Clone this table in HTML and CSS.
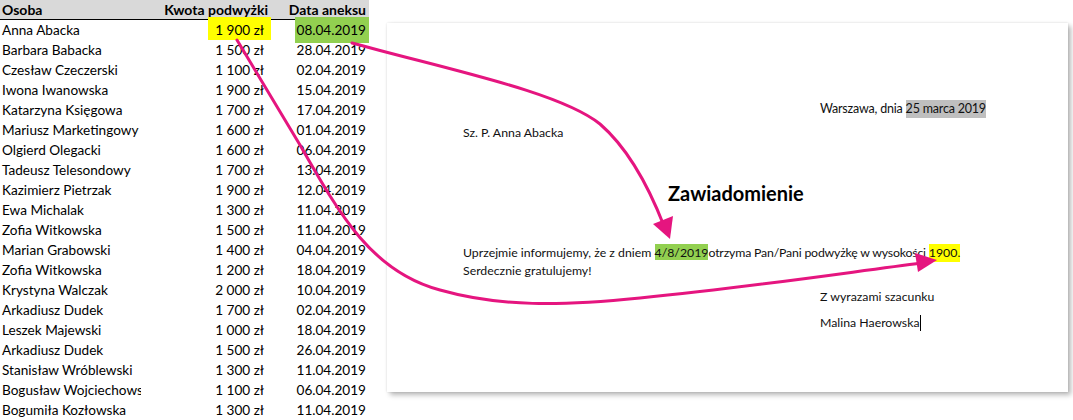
FILE: index.html
```html
<!DOCTYPE html>
<html lang="pl">
<head>
<meta charset="utf-8">
<title>Korespondencja seryjna</title>
<link rel="stylesheet" href="styles.css">
</head>
<body>
<div class="stage">
  <div class="sheet">
    <div class="row head">
      <div class="c name">Osoba</div>
      <div class="c amt">Kwota podwyżki</div>
      <div class="c date">Data aneksu</div>
    </div>
    <div class="row">
      <div class="c name">Anna Abacka</div>
      <div class="c amt"><span class="hl-yellow">1 900 zł</span></div>
      <div class="c date"><span class="hl-green">08.04.2019</span></div>
    </div>
    <div class="row"><div class="c name">Barbara Babacka</div><div class="c amt">1 500 zł</div><div class="c date">28.04.2019</div></div>
    <div class="row"><div class="c name">Czesław Czeczerski</div><div class="c amt">1 100 zł</div><div class="c date">02.04.2019</div></div>
    <div class="row"><div class="c name">Iwona Iwanowska</div><div class="c amt">1 900 zł</div><div class="c date">15.04.2019</div></div>
    <div class="row"><div class="c name">Katarzyna Księgowa</div><div class="c amt">1 700 zł</div><div class="c date">17.04.2019</div></div>
    <div class="row"><div class="c name">Mariusz Marketingowy</div><div class="c amt">1 600 zł</div><div class="c date">01.04.2019</div></div>
    <div class="row"><div class="c name">Olgierd Olegacki</div><div class="c amt">1 600 zł</div><div class="c date">06.04.2019</div></div>
    <div class="row"><div class="c name">Tadeusz Telesondowy</div><div class="c amt">1 700 zł</div><div class="c date">13.04.2019</div></div>
    <div class="row"><div class="c name">Kazimierz Pietrzak</div><div class="c amt">1 900 zł</div><div class="c date">12.04.2019</div></div>
    <div class="row"><div class="c name">Ewa Michalak</div><div class="c amt">1 300 zł</div><div class="c date">11.04.2019</div></div>
    <div class="row"><div class="c name">Zofia Witkowska</div><div class="c amt">1 500 zł</div><div class="c date">11.04.2019</div></div>
    <div class="row"><div class="c name">Marian Grabowski</div><div class="c amt">1 400 zł</div><div class="c date">04.04.2019</div></div>
    <div class="row"><div class="c name">Zofia Witkowska</div><div class="c amt">1 200 zł</div><div class="c date">18.04.2019</div></div>
    <div class="row"><div class="c name">Krystyna Walczak</div><div class="c amt">2 000 zł</div><div class="c date">10.04.2019</div></div>
    <div class="row"><div class="c name">Arkadiusz Dudek</div><div class="c amt">1 700 zł</div><div class="c date">02.04.2019</div></div>
    <div class="row"><div class="c name">Leszek Majewski</div><div class="c amt">1 000 zł</div><div class="c date">18.04.2019</div></div>
    <div class="row"><div class="c name">Arkadiusz Dudek</div><div class="c amt">1 500 zł</div><div class="c date">26.04.2019</div></div>
    <div class="row"><div class="c name">Stanisław Wróblewski</div><div class="c amt">1 300 zł</div><div class="c date">11.04.2019</div></div>
    <div class="row"><div class="c name">Bogusław Wojciechowski</div><div class="c amt">1 100 zł</div><div class="c date">06.04.2019</div></div>
    <div class="row"><div class="c name">Bogumiła Kozłowska</div><div class="c amt">1 300 zł</div><div class="c date">11.04.2019</div></div>
  </div>

  <div class="page">
    <p class="line place">Warszawa, dnia <span class="hl-gray">25 marca 2019</span></p>
    <p class="line addr">Sz. P. Anna Abacka</p>
    <h1 class="title">Zawiadomienie</h1>
    <p class="line body">Uprzejmie informujemy, że z dniem <span class="hl-green2">4/8/2019</span><span class="tight">otrzyma Pan/Pani podwyżkę w wysokości </span><span class="hl-yellow2">1900.</span></p>
    <p class="line">Serdecznie gratulujemy!</p>
    <p class="line sign first">Z wyrazami szacunku</p>
    <p class="line sign">Malina Haerowska<span class="caret"></span></p>
  </div>

  <svg class="arrows" width="1073" height="420" viewBox="0 0 1073 420">
    <g fill="none" stroke="#e5157f" stroke-width="3" stroke-linecap="round">
      <path d="M352,43 C450,70 560,92 600,124 C630,150 650,190 664,226"/>
      <path d="M237,40 L300,145 C340,215 372,272 440,290 C500,307 560,306 640,298 C760,286 850,272 922,263"/>
    </g>
    <g fill="#e5157f">
      <polygon points="670,239 653,224 673,216"/>
      <polygon points="937,260 918,272 915,253"/>
    </g>
  </svg>
</div>
</body>
</html>
```

FILE: styles.css
```css
html, body {
  margin: 0;
  padding: 0;
  background: #ffffff;
}

.stage {
  position: relative;
  width: 1073px;
  height: 420px;
  overflow: hidden;
  display: flex;
  align-items: flex-start;
}

.sheet {
  width: 369px;
  flex: none;
  font-family: "Lato", "Liberation Sans", sans-serif;
  font-size: 13.6px;
  color: #000;
}

.row {
  display: grid;
  grid-template-columns: 141px 130px 98px;
  height: 20px;
  line-height: 20px;
}

.row.head {
  background: #d9d9d9;
  height: 19px;
  line-height: 19px;
  border-bottom: 1px solid #000;
  font-weight: bold;
  font-size: 14px;
}

.c {
  white-space: nowrap;
}

.name {
  padding-left: 2px;
  overflow: hidden;
}

.head .name {
  overflow: visible;
}

.amt {
  text-align: right;
  padding-right: 7px;
}

.date {
  text-align: right;
  padding-right: 3px;
}

.head .amt,
.head .date {
  padding-right: 3px;
}

.hl-yellow {
  display: block;
  width: 63px;
  margin: -3px -7px 0 auto;
  padding: 3px 7px 0 0;
  box-sizing: border-box;
  height: 23px;
  background: #ffff00;
}

.hl-green {
  display: block;
  width: 74px;
  margin: -3px -3px 0 auto;
  padding: 3px 3px 3px 0;
  box-sizing: border-box;
  height: 26px;
  background: #92d050;
}

.page {
  flex: none;
  width: 681px;
  height: 369px;
  margin: 23px 0 0 18px;
  box-sizing: border-box;
  padding: 77px 40px 0 76px;
  background: #ffffff;
  box-shadow: 0 0 2px rgba(0, 0, 0, 0.12), 3px 3px 5px rgba(0, 0, 0, 0.28);
  font-family: "Lato", "Liberation Sans", sans-serif;
  font-size: 12.3px;
  color: #111;
}

.line {
  margin: 0;
  height: 18px;
  line-height: 18px;
  white-space: nowrap;
}

.place {
  margin-left: 357px;
  font-size: 12.5px;
  letter-spacing: -0.2px;
}

.hl-gray {
  background: #bfbfbf;
  display: inline-block;
  height: 18px;
}

.addr {
  margin-top: 6px;
}

.title {
  margin: 39px 0 0 205px;
  font-size: 20px;
  font-weight: bold;
  line-height: 24px;
  height: 24px;
  color: #000;
}

.body {
  margin-top: 39px;
}

.tight {
  letter-spacing: -0.18px;
}

.hl-green2 {
  background: #92d050;
  display: inline-block;
  height: 16px;
  line-height: 18px;
}

.hl-yellow2 {
  background: #ffff00;
  display: inline-block;
  height: 18px;
}

.sign {
  margin-left: 357px;
  margin-top: 8px;
}

.caret {
  display: inline-block;
  width: 1px;
  height: 16px;
  background: #000;
  vertical-align: -4px;
}

.arrows {
  position: absolute;
  left: 0;
  top: 0;
  pointer-events: none;
}
```
